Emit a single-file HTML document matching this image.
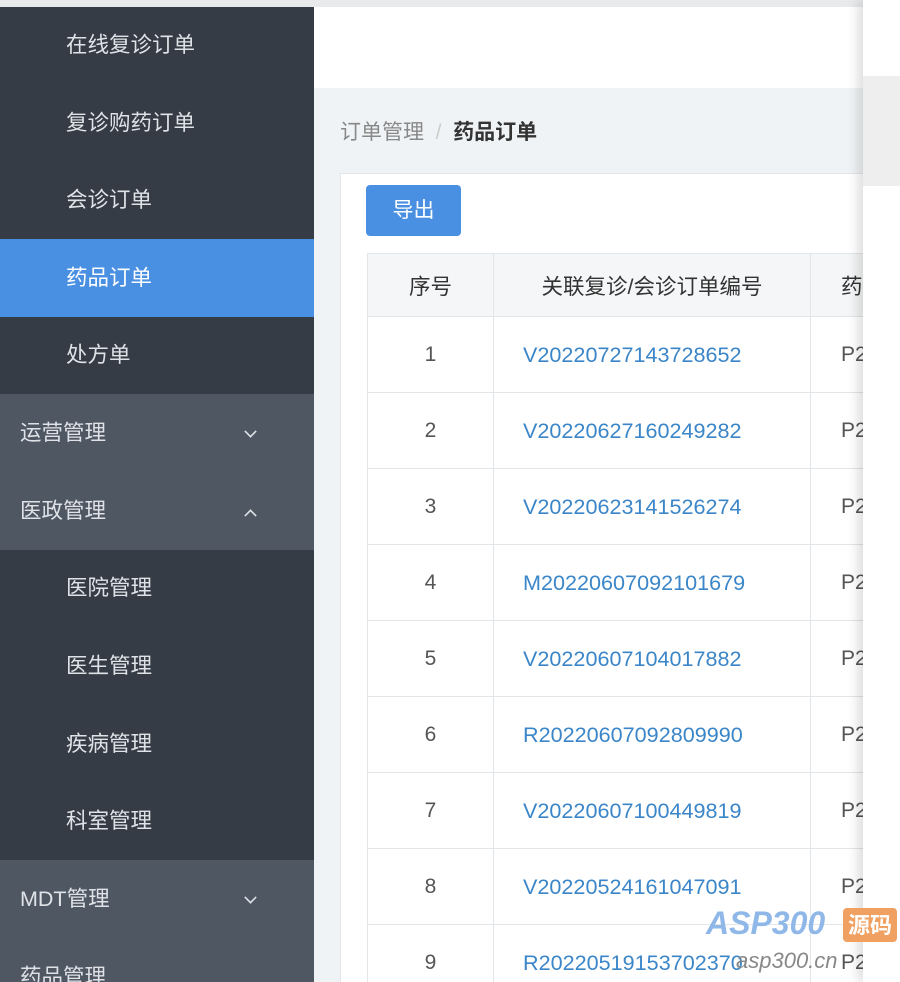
<!DOCTYPE html>
<html><head><meta charset="utf-8"><style>
*{margin:0;padding:0;box-sizing:border-box}
html,body{width:900px;height:982px;overflow:hidden}
body{position:relative;background:#f0f3f5;font-family:"Liberation Sans","Noto Sans CJK SC",sans-serif}
.side{position:absolute;left:0;top:0;width:314px;height:982px;background:#353c46;overflow:hidden}
.top{position:absolute;left:0;top:0;width:900px;height:7px;background:#e8eaec}
.it{position:absolute;left:0;width:314px;height:78px;line-height:78px;color:#dfe3e8;font-size:21.5px}
.sub{padding-left:66px}
.grp{padding-left:20px;background:#4f5763}
.act{background:#4a90e2;color:#fff}
.chev{position:absolute;left:245px;top:32px;width:11px;height:11px;border-right:2px solid #dfe3e8;border-bottom:2px solid #dfe3e8;transform:rotate(45deg) scale(.8)}
.up{top:38px;transform:rotate(-135deg) scale(.8)}
.main{position:absolute;left:314px;top:7px;width:549px;height:975px;overflow:hidden}
.hdr{position:absolute;left:0;top:0;width:549px;height:81px;background:#fff}
.bc{position:absolute;left:26px;top:109px;font-size:21px;color:#888}
.bc b{color:#333;font-weight:bold}
.card{position:absolute;left:26px;top:166px;width:600px;height:820px;background:#fff;border:1px solid #e3e6e8}
.btn{position:absolute;left:52px;top:178px;width:95px;height:51px;background:#4a90e2;color:#fff;border-radius:4px;font-size:21px;line-height:51px;text-align:center}
table{position:absolute;left:53px;top:246px;border-collapse:collapse;font-size:21px;table-layout:fixed;width:600px}
td,th{border:1px solid #e3e6e8;height:76px;text-align:center;color:#555;white-space:nowrap;overflow:hidden}
th{height:63px;background:#f4f6f7;font-weight:normal;color:#333;font-size:21.5px}
td.l{text-align:left;padding-left:29px;color:#3b86c8;font-size:21.6px}
td.p,th.p{text-align:left;padding-left:30px}
.right{position:absolute;left:863px;top:0;width:37px;height:982px;background:#fff;box-shadow:-6px 0 10px rgba(0,0,0,.12)}
.band{position:absolute;left:0;top:76px;width:37px;height:110px;background:#eeeeee}
.wm{position:absolute;left:706px;top:905px;font-size:32px;font-weight:bold;font-style:italic;color:#8fb8e8}
.wm2{position:absolute;left:843px;top:908px;width:54px;height:34px;background:#f0a060;color:#fff;font-size:22px;text-align:center;border-radius:4px;font-weight:bold}
.wm3{position:absolute;left:736px;top:948px;font-size:22px;font-style:italic;color:#888}
</style></head><body>
<div class="side">
<div class="it sub" style="top:6px">在线复诊订单</div>
<div class="it sub" style="top:84px">复诊购药订单</div>
<div class="it sub" style="top:161px">会诊订单</div>
<div class="it sub act" style="top:239px">药品订单</div>
<div class="it sub" style="top:316px">处方单</div>
<div class="it grp" style="top:394px">运营管理<span class="chev"></span></div>
<div class="it grp" style="top:472px">医政管理<span class="chev up"></span></div>
<div class="it sub" style="top:549px">医院管理</div>
<div class="it sub" style="top:627px">医生管理</div>
<div class="it sub" style="top:705px">疾病管理</div>
<div class="it sub" style="top:782px">科室管理</div>
<div class="it grp" style="top:860px">MDT管理<span class="chev"></span></div>
<div class="it grp" style="top:938px">药品管理</div>
</div>
<div class="top"></div>
<div class="main">
<div class="hdr"></div>
<div class="bc">订单管理 &nbsp;<span style="color:#ccc">/</span>&nbsp; <b>药品订单</b></div>
<div class="card"></div>
<div class="btn">导出</div>
<table>
<colgroup><col style="width:126px"><col style="width:317px"><col style="width:157px"></colgroup>
<tr><th>序号</th><th>关联复诊/会诊订单编号</th><th class="p">药品订单</th></tr>
<tr><td>1</td><td class="l">V20220727143728652</td><td class="p">P2022</td></tr>
<tr><td>2</td><td class="l">V20220627160249282</td><td class="p">P2022</td></tr>
<tr><td>3</td><td class="l">V20220623141526274</td><td class="p">P2022</td></tr>
<tr><td>4</td><td class="l">M20220607092101679</td><td class="p">P2022</td></tr>
<tr><td>5</td><td class="l">V20220607104017882</td><td class="p">P2022</td></tr>
<tr><td>6</td><td class="l">R20220607092809990</td><td class="p">P2022</td></tr>
<tr><td>7</td><td class="l">V20220607100449819</td><td class="p">P2022</td></tr>
<tr><td>8</td><td class="l">V20220524161047091</td><td class="p">P2022</td></tr>
<tr><td>9</td><td class="l">R20220519153702370</td><td class="p">P2022</td></tr>
</table>
</div>
<div class="right"><div class="band"></div></div>
<div class="wm">ASP300</div>
<div class="wm2">源码</div>
<div class="wm3">asp300.cn</div>
</body></html>
